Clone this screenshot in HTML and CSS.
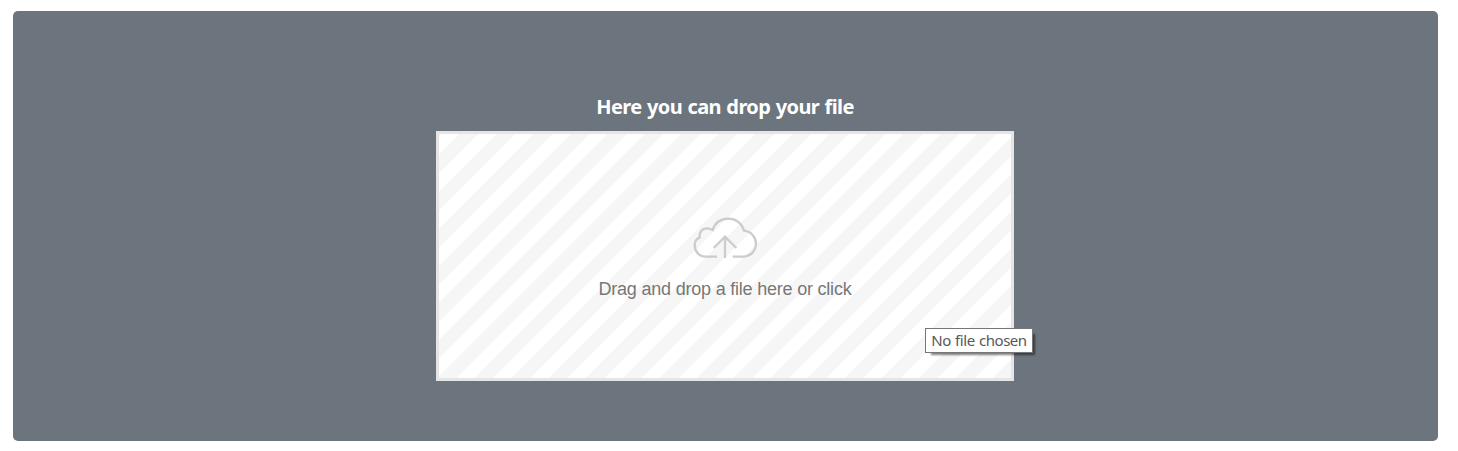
FILE: index.html
```html
<!DOCTYPE html>
<html lang="en">
<head>
<meta charset="utf-8">
<title>File upload</title>
<link rel="stylesheet" href="styles.css">
</head>
<body>
<main class="panel">
  <h1 class="title">Here you can drop your file</h1>
  <div class="dropzone">
    <svg class="cloud" viewBox="0 0 192 126" aria-hidden="true">
      <path d="M72 119H38C18 119 5 103 5 84C5 72 11 65 20 61C18 45 28 34 42 34C50 34 54 36 59 39C66 18 83 5 106 5C129 5 147 19 153 41C174 43 189 60 189 80C189 102 172 119 150 119H119"/>
      <path d="M96 123V59M62 93L96 59L130 93"/>
    </svg>
    <p class="message">Drag and drop a file here or click</p>
    <div class="tooltip" role="tooltip">No file chosen</div>
  </div>
</main>
</body>
</html>
```
FILE: styles.css
```css
* { box-sizing: border-box; }

body {
  margin: 0;
  padding: 11px 20px 10px 13px;
  background: #fff;
}

.panel {
  display: flex;
  flex-direction: column;
  align-items: center;
  height: 430px;
  padding: 80px 1px 60px 0;
  border-radius: 5px;
  background: #6c757d;
}

.title {
  margin: 0 0 8px;
  font: 700 20px/32px "Noto Sans", "Open Sans", sans-serif;
  letter-spacing: -0.6px;
  word-spacing: 0.8px;
  color: #fff;
  white-space: nowrap;
}

.dropzone {
  position: relative;
  display: flex;
  flex-direction: column;
  align-items: center;
  width: 578px;
  height: 250px;
  padding-top: 83px;
  border: 3px solid #e5e5e5;
  background-color: #fff;
  background-image: linear-gradient(-45deg, #f6f6f6 25%, transparent 25%, transparent 50%, #f6f6f6 50%, #f6f6f6 75%, transparent 75%);
  background-size: 37px 37px;
  background-position: 2px 0;
}

.cloud {
  width: 64px;
  height: 42px;
  fill: none;
  stroke: #ccc;
  stroke-width: 7;
}

.message {
  margin: 19px 0 0;
  font: 18px/22px "Liberation Sans", Arial, sans-serif;
  letter-spacing: -0.21px;
  color: #777;
  white-space: nowrap;
}

.tooltip {
  position: absolute;
  top: 194px;
  left: 486px;
  width: 108px;
  height: 25px;
  border: 1px solid #767676;
  background: #fff;
  box-shadow: 4px 4px 2px -2px rgba(0, 0, 0, 0.5);
  font: 15px/22px "Noto Sans", "Open Sans", sans-serif;
  letter-spacing: -0.45px;
  word-spacing: 0.8px;
  text-align: center;
  color: #575757;
  white-space: nowrap;
}
```
